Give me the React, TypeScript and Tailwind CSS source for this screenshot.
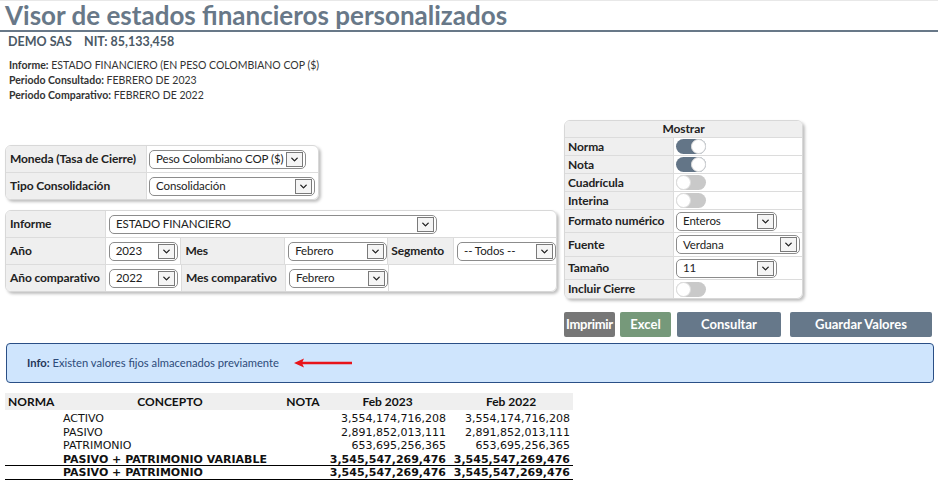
import React from 'react';
import { ChevronDown } from 'lucide-react';

const ui = { fontFamily: 'Lato, "Open Sans", sans-serif' };
const mono = { fontFamily: '"DejaVu Sans", Verdana, sans-serif' };

const Select = ({ value, className = '' }: { value: string; className?: string }) => (
  <div className={`h-[19px] border border-[#8c8c8c] rounded-[5px] bg-white flex items-center justify-between pl-[6px] pr-[2px] text-[11.5px] text-[#222] ${className}`}>
    <span className="whitespace-nowrap">{value}</span>
    <span className="w-[17px] h-[15px] shrink-0 border border-[#7a7a7a] bg-[#f5f5f5] flex items-center justify-center">
      <ChevronDown className="w-[11px] h-[11px] text-[#222]" strokeWidth={3} />
    </span>
  </div>
);

const Toggle = ({ on }: { on: boolean }) => (
  <div className={`w-[30px] h-[15px] rounded-full flex items-center ${on ? 'bg-[#637587] justify-end' : 'bg-[#c9c9c9] justify-start'}`}>
    <div className="w-[15px] h-[15px] rounded-full bg-white border border-[#ddd]" />
  </div>
);

const rows = [
  { c: 'ACTIVO', a: '3,554,174,716,208', b: '3,554,174,716,208' },
  { c: 'PASIVO', a: '2,891,852,013,111', b: '2,891,852,013,111' },
  { c: 'PATRIMONIO', a: '653,695,256,365', b: '653,695,256,365' },
  { c: 'PASIVO + PATRIMONIO VARIABLE', a: '3,545,547,269,476', b: '3,545,547,269,476', bold: true, line: true },
  { c: 'PASIVO + PATRIMONIO', a: '3,545,547,269,476', b: '3,545,547,269,476', bold: true, line: true },
];

const lbl = 'bg-[#efefef] border-r border-[#dcdcdc] flex items-center whitespace-nowrap';

export default function App() {
  return (
    <div className="w-[938px] h-[489px] bg-white overflow-hidden border-t border-[#e8e8e8]" style={ui}>
      <h1 className="h-[31px] border-b-2 border-[#687888] pl-[5px] text-[26px] leading-[28px] font-bold text-[#687888]">
        Visor de estados financieros personalizados
      </h1>
      <div className="pl-[8px] pt-[2px] text-[12.5px] font-bold text-[#4b5966] leading-[16px]">
        DEMO SAS&nbsp;&nbsp;&nbsp; NIT: 85,133,458
      </div>
      <div className="pl-[9px] pt-[8px] text-[10.5px] leading-[15px] text-[#333]">
        <div><b>Informe:</b> ESTADO FINANCIERO (EN PESO COLOMBIANO COP ($)</div>
        <div><b>Periodo Consultado:</b> FEBRERO DE 2023</div>
        <div><b>Periodo Comparativo:</b> FEBRERO DE 2022</div>
      </div>

      <div className="flex items-start pl-[5px] pt-[15px] tracking-[-0.1px]">
        <div className="flex flex-col pt-[27px] w-[559px]">
          <div className="w-[314px] border border-[#d8d8d8] rounded-[6px] shadow-[2px_2px_3px_rgba(0,0,0,0.25)] overflow-hidden text-[12px] font-bold text-[#222]">
            <div className="flex h-[27px] border-b border-[#dcdcdc]">
              <div className={`w-[141px] pl-[4px] ${lbl}`}>Moneda (Tasa de Cierre)</div>
              <div className="flex-1 flex items-center pl-[2px]"><Select value="Peso Colombiano COP ($)" className="w-[157px] font-normal" /></div>
            </div>
            <div className="flex h-[26px]">
              <div className={`w-[141px] pl-[4px] ${lbl}`}>Tipo Consolidación</div>
              <div className="flex-1 flex items-center pl-[2px]"><Select value="Consolidación" className="w-[166px] font-normal" /></div>
            </div>
          </div>

          <div className="mt-[10px] w-[552px] border border-[#d8d8d8] rounded-[6px] shadow-[2px_2px_3px_rgba(0,0,0,0.25)] overflow-hidden text-[12px] font-bold text-[#222]">
            <div className="flex h-[27px] border-b border-[#dcdcdc]">
              <div className={`w-[100px] pl-[4px] ${lbl}`}>Informe</div>
              <div className="flex-1 flex items-center pl-[3px]"><Select value="ESTADO FINANCIERO" className="w-[328px] font-normal" /></div>
            </div>
            <div className="flex h-[27px] border-b border-[#dcdcdc]">
              <div className={`w-[100px] pl-[4px] ${lbl}`}>Año</div>
              <div className="w-[76px] border-r border-[#dcdcdc] flex items-center pl-[3px]"><Select value="2023" className="w-[69px] font-normal" /></div>
              <div className={`w-[104px] pl-[4px] ${lbl}`}>Mes</div>
              <div className="w-[103px] border-r border-[#dcdcdc] flex items-center pl-[3px]"><Select value="Febrero" className="w-[99px] font-normal" /></div>
              <div className={`w-[66px] pl-[3px] ${lbl}`}>Segmento</div>
              <div className="flex-1 flex items-center pl-[3px]"><Select value="-- Todos --" className="w-[99px] font-normal" /></div>
            </div>
            <div className="flex h-[26px]">
              <div className={`w-[100px] pl-[4px] ${lbl}`}>Año comparativo</div>
              <div className="w-[76px] border-r border-[#dcdcdc] flex items-center pl-[3px]"><Select value="2022" className="w-[69px] font-normal" /></div>
              <div className={`w-[104px] pl-[4px] ${lbl}`}>Mes comparativo</div>
              <div className="w-[103px] border-r border-[#dcdcdc] flex items-center pl-[3px]"><Select value="Febrero" className="w-[99px] font-normal" /></div>
              <div className="flex-1" />
            </div>
          </div>
        </div>

        <div className="mt-[2px] w-[239px] border border-[#d8d8d8] rounded-[6px] shadow-[2px_2px_3px_rgba(0,0,0,0.25)] overflow-hidden text-[12px] font-bold text-[#222]">
          <div className="h-[17px] bg-[#efefef] border-b border-[#dcdcdc] flex items-center justify-center">Mostrar</div>
          {[
            ['Norma', true],
            ['Nota', true],
            ['Cuadrícula', false],
            ['Interina', false],
          ].map(([l, on]) => (
            <div key={l as string} className="flex h-[18px] border-b border-[#dcdcdc]">
              <div className={`w-[109px] pl-[3px] ${lbl}`}>{l as string}</div>
              <div className="flex-1 flex items-center pl-[2px]"><Toggle on={on as boolean} /></div>
            </div>
          ))}
          <div className="flex h-[23px] border-b border-[#dcdcdc]">
            <div className={`w-[109px] pl-[3px] ${lbl}`}>Formato numérico</div>
            <div className="flex-1 flex items-center pl-[2px]"><Select value="Enteros" className="w-[101px] font-normal" /></div>
          </div>
          <div className="flex h-[24px] border-b border-[#dcdcdc]">
            <div className={`w-[109px] pl-[3px] ${lbl}`}>Fuente</div>
            <div className="flex-1 flex items-center pl-[2px]"><Select value="Verdana" className="w-[124px] font-normal" /></div>
          </div>
          <div className="flex h-[23px] border-b border-[#dcdcdc]">
            <div className={`w-[109px] pl-[3px] ${lbl}`}>Tamaño</div>
            <div className="flex-1 flex items-center pl-[2px]"><Select value="11" className="w-[101px] font-normal" /></div>
          </div>
          <div className="flex h-[18px]">
            <div className={`w-[109px] pl-[3px] ${lbl}`}>Incluir Cierre</div>
            <div className="flex-1 flex items-center pl-[2px]"><Toggle on={false} /></div>
          </div>
        </div>
      </div>

      <div className="flex justify-end gap-[5px] pr-[6px] mt-[13px] text-[13px] font-bold text-white">
        <div className="w-[51px] h-[25px] bg-[#777777] rounded-[2px] flex items-center justify-center tracking-[-0.3px]">Imprimir</div>
        <div className="w-[51px] h-[25px] bg-[#76997a] rounded-[2px] flex items-center justify-center">Excel</div>
        <div className="w-[104px] h-[25px] bg-[#66788a] rounded-[2px] flex items-center justify-center ml-[1px]">Consultar</div>
        <div className="w-[142px] h-[25px] bg-[#66788a] rounded-[2px] flex items-center justify-center ml-[4px]">Guardar Valores</div>
      </div>

      <div className="mx-[6px] mt-[6px] h-[40px] w-[928px] bg-[#cfe5fd] border border-[#2a4f86] rounded-[4px] flex items-center pl-[20px] text-[11.2px] text-[#2d4b7a]">
        <span><b className="text-[#1f3658]">Info:</b> Existen valores fijos almacenados previamente</span>
        <svg width="62" height="10" viewBox="0 0 62 10" className="ml-[15px]">
          <line x1="6" y1="5" x2="58" y2="5" stroke="#e8141a" strokeWidth="2.5" />
          <path d="M0 5 L10 0.5 L8 5 L10 9.5 Z" fill="#e8141a" />
        </svg>
      </div>

      <div className="ml-[5px] mt-[10px] w-[568px]">
        <div className="grid grid-cols-[55px_220px_46px_123px_124px] h-[17px] bg-[#efefef] items-center text-[12px] font-bold text-[#111]">
          <div className="pl-[3px]">NORMA</div>
          <div className="text-center">CONCEPTO</div>
          <div className="text-center">NOTA</div>
          <div className="text-center">Feb 2023</div>
          <div className="text-center">Feb 2022</div>
        </div>
        <div className="pt-[2px]" style={mono}>
          {rows.map((r) => (
            <div
              key={r.c}
              className={`grid grid-cols-[55px_220px_46px_123px_124px] h-[13.5px] items-center text-[11px] leading-[13px] text-[#111] ${r.bold ? 'font-bold' : ''} ${r.line ? 'border-b border-black' : ''}`}
            >
              <div />
              <div className="pl-[3px] whitespace-nowrap">{r.c}</div>
              <div />
              <div className="text-right pr-[3px]">{r.a}</div>
              <div className="text-right pr-[3px]">{r.b}</div>
            </div>
          ))}
        </div>
      </div>
    </div>
  );
}
